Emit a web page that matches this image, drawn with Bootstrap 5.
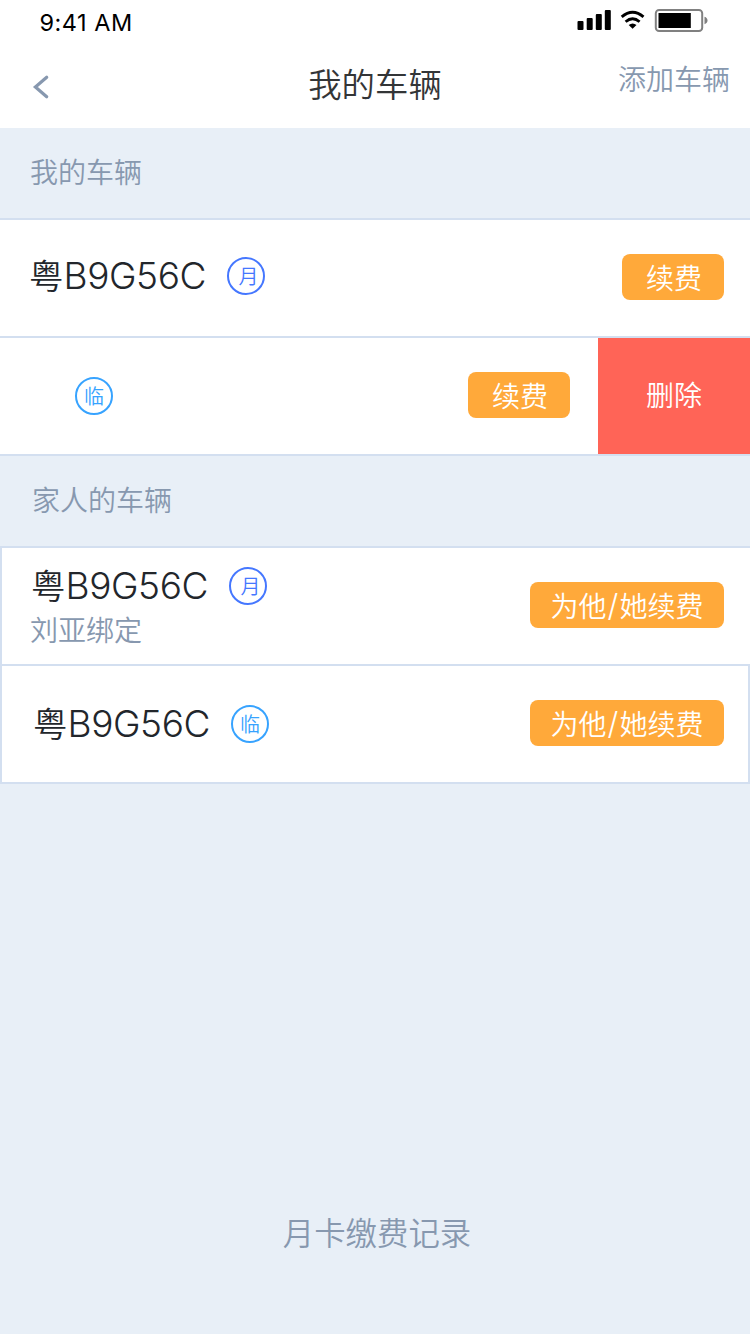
<!DOCTYPE html>
<html lang="zh-CN">
<head>
<meta charset="utf-8">
<meta name="viewport" content="width=device-width, initial-scale=1">
<title>我的车辆</title>
<link href="https://cdn.jsdelivr.net/npm/bootstrap@5.3.0/dist/css/bootstrap.min.css" rel="stylesheet">
<style>
  :root { --slate:#8798af; --canvas:#e8eff7; --rule:#d3dff0; --ink:#22262b; }
  body { background:var(--canvas); color:var(--ink); font-family:"Noto Sans CJK SC",sans-serif; font-weight:350; font-size:28px; line-height:40px; min-height:1334px; }
  .status-bar { height:40px; padding:0 42px 0 39.5px; font-family:Inter,sans-serif; font-weight:400; font-size:23.5px; line-height:46px; letter-spacing:.5px; color:#000; }
  .title-bar { height:88px; display:grid; grid-template-columns:1fr auto 1fr; }
  .title-bar h1 { font-size:33.4px; font-weight:350; line-height:48px; margin:19px 0 0; color:#333537; }
  .back-btn { width:20px; height:26px; margin:33px 0 0 32px; }
  .slate-text { color:var(--slate); }
  .section-label { height:90px; padding:23px 30px 0; }
  .vehicle-row { height:118px; border-bottom:2px solid var(--rule); background:#fff; }
  .vehicle-list { border-top:2px solid var(--rule); }
  .plate { width:178px; height:46px; font-size:34.5px; line-height:44px; font-weight:350; white-space:nowrap; }
  .plate b { font-family:Inter,sans-serif; font-weight:300; font-size:37px; letter-spacing:-.4px; }
  .tag { width:38px; height:38px; border:2px solid; border-radius:50%; font-size:20px; line-height:34px; text-align:center; }
  .tag-month { color:#4577ff; padding-left:5px; }
  .tag-temp { color:#37a3ff; line-height:33px; }
  .btn-pay { --bs-btn-bg:#ffa93a; --bs-btn-color:#fff; --bs-btn-border-width:0; --bs-btn-border-radius:8px; --bs-btn-padding-x:0; --bs-btn-padding-y:0; --bs-btn-font-size:28px; --bs-btn-font-weight:350; --bs-btn-line-height:46px; --bs-btn-hover-bg:#f79d28; --bs-btn-hover-color:#fff; width:102px; height:46px; padding-left:2px; }
  .btn-wide { width:194px; padding-left:0; }
  .slash { font-family:Inter,sans-serif; font-weight:300; font-size:31px; line-height:1; margin:0 1px; }
  .btn-remove { width:152px; height:116px; background:#ff6457; color:#fff; border:0; border-radius:0; font-size:28px; font-weight:350; padding:0 0 5px; }
  .family-list .vehicle-row { border-left:2px solid var(--rule); }
  .family-list .vehicle-row:last-child { border-right:2px solid var(--rule); }
  .records-link { font-size:31.4px; line-height:46px; font-weight:350; }
</style>
</head>
<body class="d-flex flex-column">
  <header class="bg-white">
    <div class="status-bar d-flex justify-content-between">
      <span>9:41 AM</span>
      <svg width="132" height="40" viewBox="576 0 132 40" aria-hidden="true">
        <rect x="577.5" y="21" width="6" height="9" rx="1"/><rect x="586.7" y="18" width="6" height="12" rx="1"/><rect x="595.8" y="14" width="6" height="16" rx="1"/><rect x="604.8" y="10" width="6" height="20" rx="1"/>
        <g fill="none" stroke="#000" stroke-width="2.8"><path d="M621.7 16.9Q632.6 7.5 643.5 16.9"/><path d="M625.6 21.7Q632.6 15.7 639.6 21.7"/></g>
        <path d="M628.7 25Q632.6 21.8 636.5 25L632.6 28.8Z"/>
        <rect x="655.8" y="10" width="46.4" height="21" rx="3.3" fill="#fff" stroke="#808080" stroke-width="2"/>
        <rect x="658.5" y="13" width="32.3" height="15"/><path d="M704.5 16.8q3 1 3 3.7t-3 3.7z" fill="#808080"/>
      </svg>
    </div>
    <nav class="title-bar">
      <svg class="back-btn" viewBox="32 73 20 26" role="img" aria-label="返回"><path d="M46.7 77.3L35.4 87 46.7 96.7" fill="none" stroke="#8798af" stroke-width="3.2" stroke-linecap="round" stroke-linejoin="miter"/></svg>
      <h1>我的车辆</h1>
      <a href="#" class="slate-text text-decoration-none text-end" style="padding:18px 20px 0 0">添加车辆</a>
    </nav>
  </header>
  <main class="flex-grow-1">
    <div class="section-label slate-text">我的车辆</div>
    <div class="vehicle-list">
      <div class="vehicle-row d-flex align-items-start justify-content-between">
        <div class="d-flex" style="padding:32px 0 0 29px"><div class="plate">粤<b>B9G56C</b></div><span class="tag tag-month" style="margin:5px 0 0 20px">月</span></div>
        <button class="btn btn-pay" style="margin:34px 26px 0 0">续费</button>
      </div>
      <div class="vehicle-row d-flex align-items-start">
        <span class="tag tag-temp" style="margin:39px 0 0 75px">临</span>
        <button class="btn btn-pay ms-auto" style="margin:34px 28px 0 0">续费</button>
        <button class="btn btn-remove">删除</button>
      </div>
    </div>
    <div class="section-label slate-text" style="padding-left:32px">家人的车辆</div>
    <div class="vehicle-list family-list">
      <div class="vehicle-row d-flex align-items-start justify-content-between">
        <div style="padding:14px 0 0 28px">
          <div class="d-flex" style="padding-left:1px"><div class="plate">粤<b>B9G56C</b></div><span class="tag tag-month" style="margin:5px 0 0 20px">月</span></div>
          <div class="slate-text" style="margin-top:1px">刘亚绑定</div>
        </div>
        <button class="btn btn-pay btn-wide" style="margin:34px 26px 0 0">为他<span class="slash">/</span>她续费</button>
      </div>
      <div class="vehicle-row d-flex align-items-start justify-content-between">
        <div class="d-flex" style="padding:34px 0 0 31px"><div class="plate">粤<b>B9G56C</b></div><span class="tag tag-temp" style="margin:5px 0 0 20px">临</span></div>
        <button class="btn btn-pay btn-wide" style="margin:34px 24px 0 0">为他<span class="slash">/</span>她续费</button>
      </div>
    </div>
  </main>
  <footer class="text-center" style="padding:0 0 79px 4px"><a href="#" class="records-link slate-text text-decoration-none">月卡缴费记录</a></footer>
  <script src="https://cdn.jsdelivr.net/npm/bootstrap@5.3.0/dist/js/bootstrap.bundle.min.js"></script>
</body>
</html>
